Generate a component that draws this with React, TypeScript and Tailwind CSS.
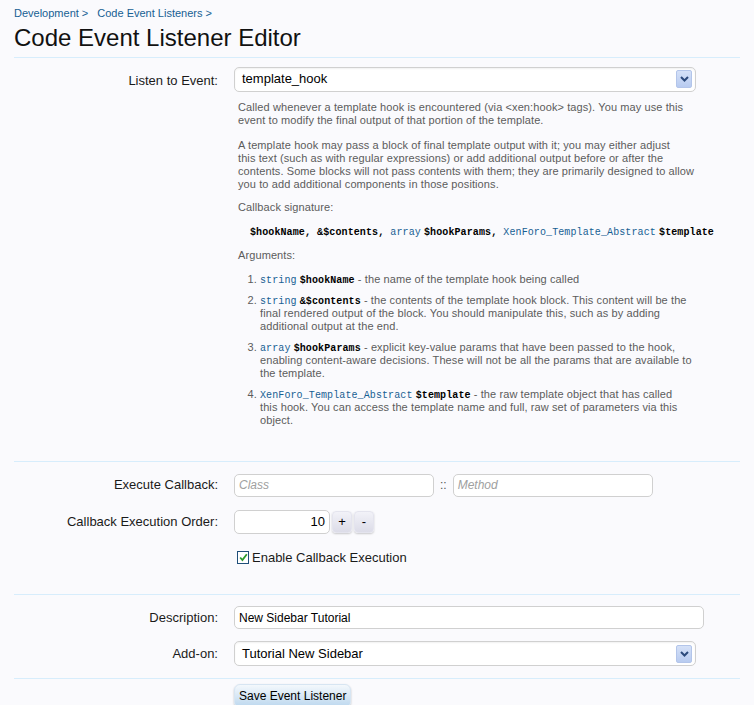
import React from 'react';

const font = { fontFamily: '"Liberation Sans", Arial, sans-serif' };
const monoFont = { fontFamily: '"Liberation Mono", "DejaVu Sans Mono", monospace' };

function SelectBox({ value, width }: { value: string; width: string }) {
  return (
    <div
      className={`${width} h-[25px] flex items-center justify-between bg-white border border-[#d0d0d0] rounded-[5px] pl-[7px] pr-[3px] shadow-[inset_0_1px_2px_rgba(0,0,0,0.06)]`}
    >
      <span className="text-[13px] text-black">{value}</span>
      <span className="w-[16px] h-[18px] rounded-[2px] bg-gradient-to-b from-[#d5e1f8] to-[#b8cbf0] border border-[#b3c5ea] flex items-center justify-center">
        <svg width="9" height="6" viewBox="0 0 9 6">
          <path d="M1 1 L4.5 4.5 L8 1" fill="none" stroke="#2c4a7c" strokeWidth="2" />
        </svg>
      </span>
    </div>
  );
}

function Label({ children }: { children: React.ReactNode }) {
  return <div className="text-right text-[13px] text-[#1a1a1a]">{children}</div>;
}

const Mono = ({ children, blue }: { children: React.ReactNode; blue?: boolean }) => (
  <span className={`text-[10px] leading-[10px] ${blue ? 'text-[#176093]' : 'font-bold text-black'}`} style={monoFont}>
    {children}
  </span>
);

const args = [
  { type: 'string', name: '$hookName', lines: ['the name of the template hook being called'] },
  {
    type: 'string',
    name: '&$contents',
    lines: [
      'the contents of the template hook block. This content will be the',
      'final rendered output of the block. You should manipulate this, such as by adding',
      'additional output at the end.',
    ],
  },
  {
    type: 'array',
    name: '$hookParams',
    lines: [
      'explicit key-value params that have been passed to the hook,',
      'enabling content-aware decisions. These will not be all the params that are available to',
      'the template.',
    ],
  },
  {
    type: 'XenForo_Template_Abstract',
    name: '$template',
    lines: [
      'the raw template object that has called',
      'this hook. You can access the template name and full, raw set of parameters via this',
      'object.',
    ],
  },
];

export default function App() {
  return (
    <div className="min-h-screen bg-[#fafafd] px-[14px]" style={font}>
      <div className="pt-[5px] text-[11px] text-[#176093] flex gap-[9px]">
        <span>Development &gt;</span>
        <span>Code Event Listeners &gt;</span>
      </div>
      <h1 className="text-[24px] leading-[30px] text-[#111] mt-[1px]">Code Event Listener Editor</h1>
      <div className="border-b border-[#d7edfc] mt-[4px]" />

      {/* event */}
      <div className="grid grid-cols-[204px_1fr] gap-x-4 pt-[9px]">
        <div className="pt-[4px]">
          <Label>Listen to Event:</Label>
        </div>
        <div>
          <SelectBox value="template_hook" width="w-[462px]" />
          <div className="pl-[4px] text-[11px] leading-[13px] tracking-[0.1px] text-[#5c5c5c] whitespace-nowrap">
            <p className="mt-[9px]">
              Called whenever a template hook is encountered (via &lt;xen:hook&gt; tags). You may use this
              <br />
              event to modify the final output of that portion of the template.
            </p>
            <p className="mt-[12px]">
              A template hook may pass a block of final template output with it; you may either adjust
              <br />
              this text (such as with regular expressions) or add additional output before or after the
              <br />
              contents. Some blocks will not pass contents with them; they are primarily designed to allow
              <br />
              you to add additional components in those positions.
            </p>
            <p className="mt-[10px]">Callback signature:</p>
            <p className="mt-[11px] ml-[12px] h-[13px] leading-[13px]">
              <Mono>$hookName</Mono>
              <Mono>, &amp;$contents, </Mono>
              <Mono blue>array</Mono> <Mono>$hookParams, </Mono>
              <Mono blue>XenForo_Template_Abstract</Mono> <Mono>$template</Mono>
            </p>
            <p className="mt-[11px]">Arguments:</p>
            <ol className="mt-[11px] ml-[22px] list-decimal">
              {args.map((a) => (
                <li key={a.name} className="mb-[8px]">
                  <Mono blue>{a.type}</Mono> <Mono>{a.name}</Mono> - {a.lines[0]}
                  {a.lines.slice(1).map((l) => (
                    <React.Fragment key={l}>
                      <br />
                      {l}
                    </React.Fragment>
                  ))}
                </li>
              ))}
            </ol>
          </div>
        </div>
      </div>

      <div className="border-b border-[#d7edfc] mt-[26px]" />

      {/* callback */}
      <div className="grid grid-cols-[204px_1fr] gap-x-4 gap-y-[13px] pt-[12px] pb-[27px] items-center">
        <Label>Execute Callback:</Label>
        <div className="flex items-center gap-[6px]">
          <div className="w-[200px] h-[23px] bg-white border border-[#d0d0d0] rounded-[5px] px-[4px] flex items-center text-[12px] italic text-[#a0a0a0]">
            Class
          </div>
          <span className="text-[12px] text-[#555]">::</span>
          <div className="w-[200px] h-[23px] bg-white border border-[#d0d0d0] rounded-[5px] px-[4px] flex items-center text-[12px] italic text-[#a0a0a0]">
            Method
          </div>
        </div>

        <Label>Callback Execution Order:</Label>
        <div className="flex items-center gap-[2px]">
          <div className="w-[96px] h-[24px] bg-white border border-[#d0d0d0] rounded-[5px] px-[4px] flex items-center justify-end text-[13px] text-black">
            10
          </div>
          <button className="w-[20px] h-[22px] rounded-[4px] bg-gradient-to-b from-[#f2f2f8] to-[#dcdce8] border border-[#e4e4ee] shadow-[0_1px_2px_rgba(0,0,0,0.2)] text-[13px] text-black leading-none">
            +
          </button>
          <button className="w-[20px] h-[22px] rounded-[4px] bg-gradient-to-b from-[#f2f2f8] to-[#dcdce8] border border-[#e4e4ee] shadow-[0_1px_2px_rgba(0,0,0,0.2)] text-[13px] text-black leading-none">
            -
          </button>
        </div>

        <div />
        <label className="flex items-center gap-[3px] mt-[1px] text-[13px] text-[#1a1a1a]">
          <span className="w-[12px] h-[13px] border border-[#1f4f7a] bg-white flex items-center justify-center ml-[3px]">
            <svg width="9" height="9" viewBox="0 0 9 9">
              <path d="M1.2 4.5 L3.4 7 L7.8 1.2" fill="none" stroke="#2c9a2c" strokeWidth="1.8" />
            </svg>
          </span>
          Enable Callback Execution
        </label>
      </div>

      <div className="border-b border-[#d7edfc]" />

      {/* description */}
      <div className="grid grid-cols-[204px_1fr] gap-x-4 gap-y-[12px] pt-[11px] pb-[12px] items-center">
        <Label>Description:</Label>
        <div className="w-[470px] h-[23px] bg-white border border-[#d0d0d0] rounded-[5px] px-[4px] flex items-center text-[12px] text-black">
          New Sidebar Tutorial
        </div>

        <Label>Add-on:</Label>
        <SelectBox value="Tutorial New Sidebar" width="w-[462px]" />
      </div>

      <div className="border-b border-[#d7edfc]" />

      <div className="pl-[220px] pt-[4px]">
        <button className="h-[24px] px-[4px] rounded-[6px] bg-gradient-to-b from-[#f4f8fc] to-[#bcd7ee] border border-[#d7e5f2] shadow-[0_1px_2px_rgba(0,0,0,0.25)] text-[12px] text-black">
          Save Event Listener
        </button>
      </div>
    </div>
  );
}
